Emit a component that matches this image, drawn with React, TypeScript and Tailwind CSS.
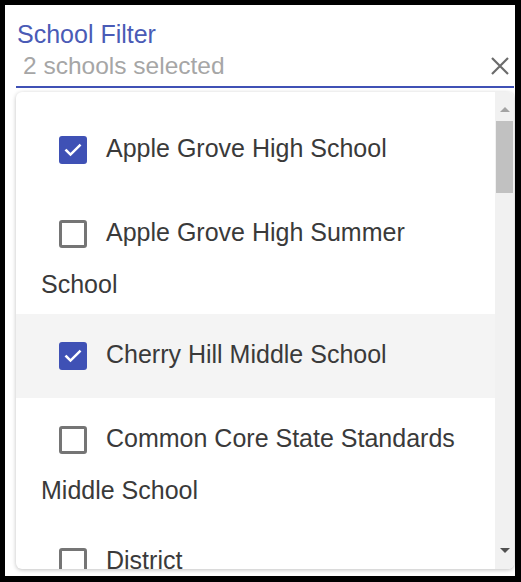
import React from "react";

type School = { name: string; checked: boolean; hovered?: boolean };

const schools: School[] = [
  { name: "Apple Grove High School", checked: true },
  { name: "Apple Grove High Summer School", checked: false },
  { name: "Cherry Hill Middle School", checked: true, hovered: true },
  { name: "Common Core State Standards Middle School", checked: false },
  { name: "District", checked: false },
];

const CheckBox = ({ checked }: { checked: boolean }) => (
  <span className="inline-block align-middle py-[17px] pl-[18px] pr-[19px]">
    {checked ? (
      <span className="flex h-[28px] w-[28px] items-center justify-center rounded-[3px] bg-[#3f51b5]">
        <svg width="20" height="20" viewBox="0 0 24 24" fill="none">
          <path
            d="M4 12.5l5 5L20 6.5"
            stroke="white"
            strokeWidth="3"
            strokeLinecap="square"
          />
        </svg>
      </span>
    ) : (
      <span className="block h-[28px] w-[28px] rounded-[3px] border-[3px] border-[#757575]" />
    )}
  </span>
);

const Scrollbar = () => (
  <div className="flex w-[19px] flex-col items-center bg-[#f1f1f1]">
    <div className="flex h-[29px] w-full items-center justify-center pt-[6px]">
      <span className="h-0 w-0 border-x-[5px] border-b-[5px] border-x-transparent border-b-[#a3a3a3]" />
    </div>
    <div className="h-[72px] w-[17px] bg-[#c1c1c1]" />
    <div className="flex-1" />
    <div className="flex h-[30px] w-full items-center justify-center pb-[8px]">
      <span className="h-0 w-0 border-x-[5px] border-t-[5px] border-x-transparent border-t-[#505050]" />
    </div>
  </div>
);

export default function App() {
  return (
    <div className="h-[582px] w-[521px] bg-black pl-[5px] pt-[5px] pr-[6px] pb-[6px] font-['Liberation_Sans',Arial,sans-serif]">
      <div className="flex h-full flex-col bg-white pl-[11px] pr-[1px]">
        <label className="mt-[15px] block pl-[1px] text-[25px] leading-[28px] text-[#4a5bb6]">
          School Filter
        </label>
        <div className="mt-[4px] flex items-center justify-between border-b-2 border-[#3f51b5] pb-[6px] pl-[7px] pr-[4px]">
          <span className="text-[24.5px] leading-[28px] text-[#a6a6a6]">
            2 schools selected
          </span>
          <svg width="20" height="20" viewBox="0 0 20 20">
            <path d="M2 2L18 18M18 2L2 18" stroke="#6b6b6b" strokeWidth="2.2" />
          </svg>
        </div>
        <div className="mt-[4px] flex h-[477px] overflow-hidden rounded-[6px] bg-white shadow-[0_1px_4px_rgba(0,0,0,0.25)]">
          <ul className="flex-1 overflow-hidden pt-[16px]">
            {schools.map((s) => (
              <li
                key={s.name}
                className={`py-[11px] pl-[25px] pr-[24px] text-[25px] leading-[38px] text-[#3a3a3a] ${
                  s.hovered ? "bg-[#f4f4f4]" : ""
                }`}
              >
                <CheckBox checked={s.checked} />
                {s.name}
              </li>
            ))}
          </ul>
          <Scrollbar />
        </div>
      </div>
    </div>
  );
}
